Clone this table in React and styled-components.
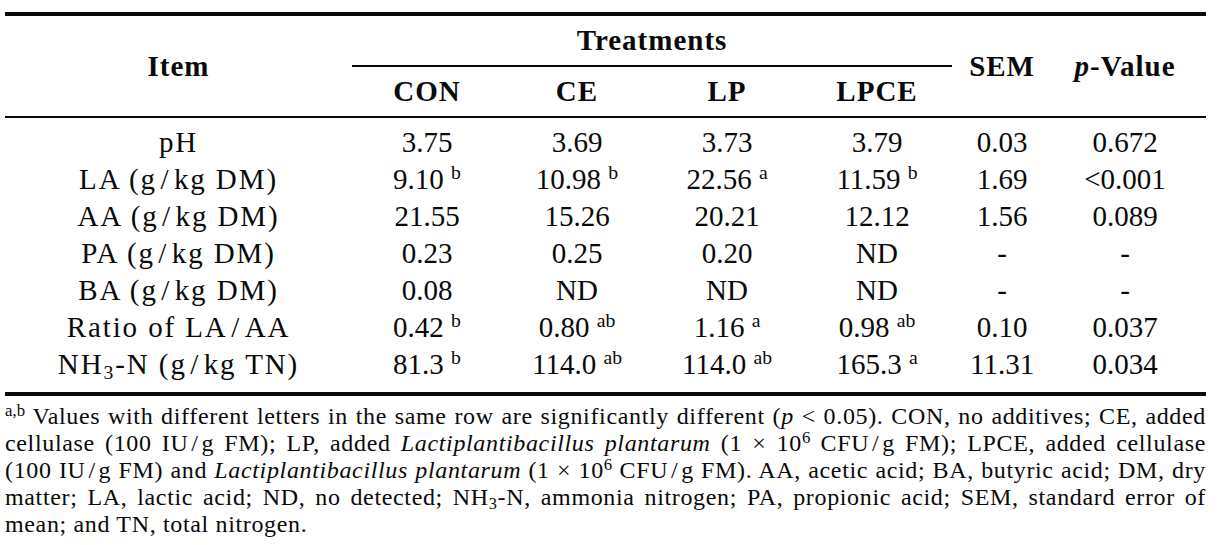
import React from "react";
import styled, { createGlobalStyle } from "styled-components";

const GlobalStyle = createGlobalStyle`
  body { margin: 0; padding: 0; background: #fff; color: #0a0a0a; font-family: 'Liberation Serif', serif; }
`;

const Page = styled.div`
  width: 1201px;
  padding: 12px 0 0 5px;
  font-family: 'Liberation Serif', serif;
`;

const Table = styled.table`
  width: 1201px;
  border-collapse: collapse;
  table-layout: fixed;
  font-family: 'Liberation Serif', serif;
  font-size: 29px;
`;

const Col = styled.col`
  width: ${(p) => p.$w}px;
`;

const Thead = styled.thead`
  border-bottom: 2px solid #0a0a0a;
`;

const Tbody = styled.tbody`
  border-bottom: 4px solid #0a0a0a;
`;

const TopRow = styled.tr`
  border-top: 4px solid #0a0a0a;
`;

const HeadCell = styled.th`
  font-family: 'Liberation Serif', serif;
  font-weight: 700;
  font-size: 29px;
  text-align: center;
  vertical-align: middle;
  padding: 0 ${(p) => p.$padRight || 0}px 0 0;
  height: 49px;
  line-height: 1;
  white-space: nowrap;
  letter-spacing: 1px;
  border-bottom: ${(p) => (p.$rule ? "2px solid #0a0a0a" : "none")};
`;

const BodyRow = styled.tr`
  &:first-child > td { padding-top: 6px; }
  &:last-child > td { padding-bottom: 9px; }
`;

const Cell = styled.td`
  font-family: 'Liberation Serif', serif;
  font-size: 29px;
  text-align: center;
  padding: 0 ${(p) => p.$padRight || 0}px 0 0;
  line-height: 37px;
  white-space: nowrap;
  letter-spacing: ${(p) => (p.$label ? "1.9px" : "0")};
`;

const Sup = styled.sup`
  font-size: ${(p) => p.$size || 0.68}em;
  vertical-align: ${(p) => p.$raise || 0.5}em;
  line-height: 0;
  letter-spacing: 0;
`;

const Sub = styled.sub`
  font-size: 0.68em;
  vertical-align: -0.25em;
  line-height: 0;
`;

const Slash = styled.span`
  padding: 0 0.12em;
`;

const It = styled.i`
  font-style: italic;
`;

const Footnote = styled.div`
  width: 1201px;
  margin-top: 7px;
  font-family: 'Liberation Serif', serif;
  font-size: 24px;
  line-height: 27px;
  letter-spacing: 0.65px;
`;

const FootLine = styled.div`
  white-space: nowrap;
  text-align: ${(p) => (p.$last ? "left" : "justify")};
  text-align-last: ${(p) => (p.$last ? "left" : "justify")};
`;

const S = () => <Slash>/</Slash>;

const colWidths = [347, 150, 150, 150, 150, 100, 154];

const rows = [
  { label: <>pH</>, v: [["3.75"], ["3.69"], ["3.73"], ["3.79"], ["0.03"], ["0.672"]] },
  {
    label: <>LA (g<S />kg DM)</>,
    v: [["9.10", "b"], ["10.98", "b"], ["22.56", "a"], ["11.59", "b"], ["1.69"], ["<0.001"]],
  },
  {
    label: <>AA (g<S />kg DM)</>,
    v: [["21.55"], ["15.26"], ["20.21"], ["12.12"], ["1.56"], ["0.089"]],
  },
  {
    label: <>PA (g<S />kg DM)</>,
    v: [["0.23"], ["0.25"], ["0.20"], ["ND"], ["-"], ["-"]],
  },
  {
    label: <>BA (g<S />kg DM)</>,
    v: [["0.08"], ["ND"], ["ND"], ["ND"], ["-"], ["-"]],
  },
  {
    label: <>Ratio of LA<S />AA</>,
    v: [["0.42", "b"], ["0.80", "ab"], ["1.16", "a"], ["0.98", "ab"], ["0.10"], ["0.037"]],
  },
  {
    label: <>NH<Sub>3</Sub>-N (g<S />kg TN)</>,
    v: [["81.3", "b"], ["114.0", "ab"], ["114.0", "ab"], ["165.3", "a"], ["11.31"], ["0.034"]],
  },
];

export default function App() {
  return (
    <>
      <GlobalStyle />
      <Page>
        <Table>
          <colgroup>
            {colWidths.map((w, i) => (
              <Col key={i} $w={w} />
            ))}
          </colgroup>
          <Thead>
            <TopRow>
              <HeadCell rowSpan={2}>Item</HeadCell>
              <HeadCell colSpan={4} $rule>Treatments</HeadCell>
              <HeadCell rowSpan={2}>SEM</HeadCell>
              <HeadCell rowSpan={2} $padRight={8}>
                <It>p</It>-Value
              </HeadCell>
            </TopRow>
            <tr>
              <HeadCell>CON</HeadCell>
              <HeadCell>CE</HeadCell>
              <HeadCell>LP</HeadCell>
              <HeadCell>LPCE</HeadCell>
            </tr>
          </Thead>
          <Tbody>
            {rows.map((r, i) => (
              <BodyRow key={i}>
                <Cell $label>{r.label}</Cell>
                {r.v.map(([num, mark], j) => (
                  <Cell key={j} $padRight={j === 5 ? 8 : 0}>
                    {num}
                    {mark ? <> <Sup>{mark}</Sup></> : null}
                  </Cell>
                ))}
              </BodyRow>
            ))}
          </Tbody>
        </Table>
        <Footnote>
          <FootLine>
            <Sup $size={0.7} $raise={0.45}>a,b</Sup> Values with different letters in the same row are significantly different (<It>p</It> &lt; 0.05). CON, no additives; CE, added
          </FootLine>
          <FootLine>
            cellulase (100 IU<S />g FM); LP, added <It>Lactiplantibacillus plantarum</It> (1 × 10<Sup $size={0.7} $raise={0.45}>6</Sup> CFU<S />g FM); LPCE, added cellulase
          </FootLine>
          <FootLine>
            (100 IU<S />g FM) and <It>Lactiplantibacillus plantarum</It> (1 × 10<Sup $size={0.7} $raise={0.45}>6</Sup> CFU<S />g FM). AA, acetic acid; BA, butyric acid; DM, dry
          </FootLine>
          <FootLine>
            matter; LA, lactic acid; ND, no detected; NH<Sub>3</Sub>-N, ammonia nitrogen; PA, propionic acid; SEM, standard error of
          </FootLine>
          <FootLine $last>mean; and TN, total nitrogen.</FootLine>
        </Footnote>
      </Page>
    </>
  );
}
